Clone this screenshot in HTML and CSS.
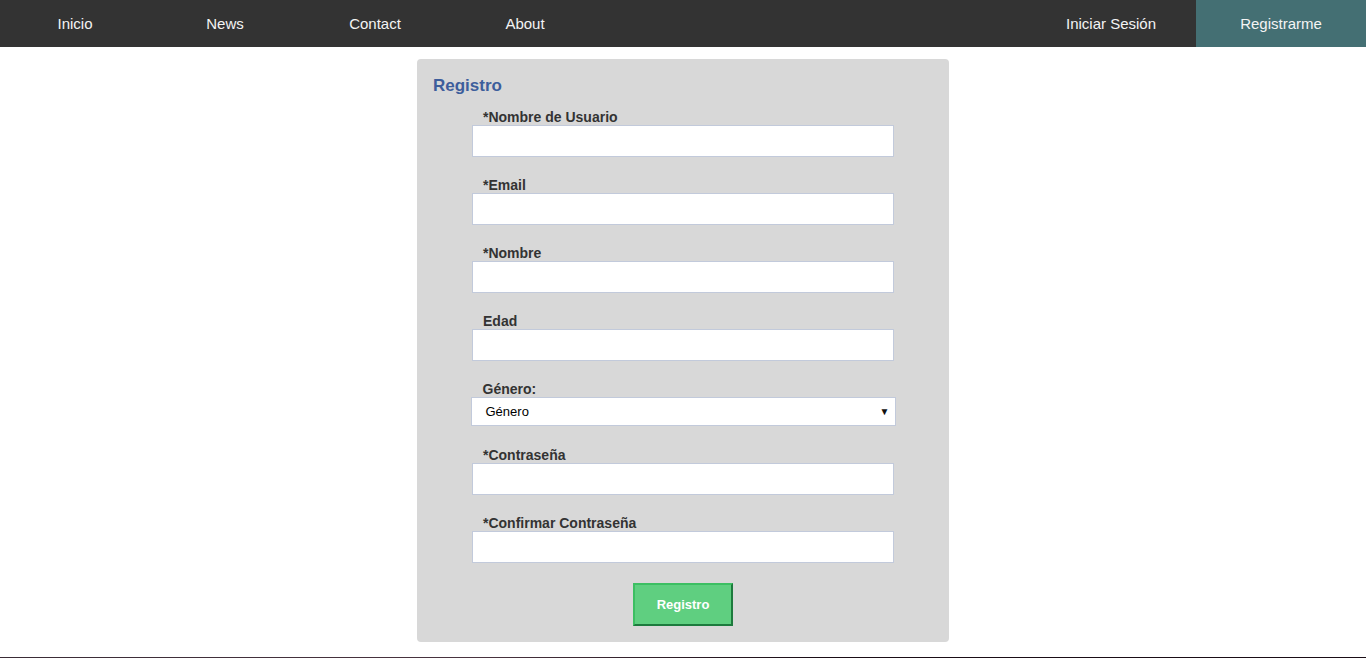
FILE: index.html
```html
<!DOCTYPE html>
<html lang="es">
<head>
<meta charset="utf-8">
<title>Registro</title>
<link rel="stylesheet" href="styles.css">
</head>
<body>
<nav class="topnav">
  <ul class="nav-left">
    <li><a href="#">Inicio</a></li>
    <li><a href="#">News</a></li>
    <li><a href="#">Contact</a></li>
    <li><a href="#">About</a></li>
  </ul>
  <ul class="nav-right">
    <li><a href="#">Iniciar Sesión</a></li>
    <li class="active"><a href="#">Registrarme</a></li>
  </ul>
</nav>
<main class="page">
  <form class="panel">
    <h2 class="panel-title">Registro</h2>
    <div class="field">
      <label class="lbl">*Nombre de Usuario</label>
      <input class="txt" type="text">
    </div>
    <div class="field">
      <label class="lbl">*Email</label>
      <input class="txt" type="text">
    </div>
    <div class="field">
      <label class="lbl">*Nombre</label>
      <input class="txt" type="text">
    </div>
    <div class="field">
      <label class="lbl">Edad</label>
      <input class="txt" type="text">
    </div>
    <div class="field field-select">
      <label class="lbl">Género:</label>
      <div class="select">
        <span class="select-value">Género</span>
        <span class="select-arrow">▼</span>
      </div>
    </div>
    <div class="field">
      <label class="lbl">*Contraseña</label>
      <input class="txt" type="password">
    </div>
    <div class="field">
      <label class="lbl">*Confirmar Contraseña</label>
      <input class="txt" type="password">
    </div>
    <div class="actions">
      <button class="btn" type="button">Registro</button>
    </div>
  </form>
</main>
<footer class="footer"></footer>
</body>
</html>
```
FILE: styles.css
```css
html, body {
  margin: 0;
  padding: 0;
}
body {
  font-family: "Liberation Sans", Arial, sans-serif;
  background: #fff;
  height: 658px;
  overflow: hidden;
  display: flex;
  flex-direction: column;
}
.topnav {
  height: 47px;
  background: #333333;
  display: flex;
  justify-content: space-between;
}
.topnav ul {
  list-style: none;
  margin: 0;
  padding: 0;
  display: flex;
}
.nav-left li {
  width: 150px;
}
.nav-right li {
  width: 170px;
}
.topnav a {
  display: block;
  height: 47px;
  line-height: 47px;
  text-align: center;
  color: #f4f4f4;
  text-decoration: none;
  font-size: 15px;
}
.nav-right li.active {
  background: #446f73;
}
.page {
  flex: 1;
  display: flex;
  justify-content: center;
  align-items: flex-start;
}
.panel {
  width: 532px;
  margin-top: 12px;
  margin-left: 0;
  background: #d8d8d8;
  border-radius: 4px;
  padding: 17px 0 16px;
  box-sizing: border-box;
  display: flex;
  flex-direction: column;
  align-items: center;
}
.panel-title {
  align-self: flex-start;
  margin: 0 0 13px 16px;
  font-size: 17px;
  line-height: 20px;
  font-weight: bold;
  color: #3d5e9c;
}
.field {
  width: 422px;
  display: flex;
  flex-direction: column;
  margin-bottom: 20px;
}
.field-select {
  width: 425px;
  margin-bottom: 21px;
}
.lbl {
  display: block;
  padding-left: 11px;
  font-size: 14px;
  line-height: 16px;
  font-weight: bold;
  color: #333;
}
.field-select .lbl {
  padding-left: 12px;
}
.txt {
  display: block;
  width: 422px;
  height: 32px;
  margin: 0;
  box-sizing: border-box;
  border: 1px solid #c2cadb;
  background: #fff;
  outline: none;
}
.select {
  height: 29px;
  box-sizing: border-box;
  border: 1px solid #c2cadb;
  background: #fff;
  display: flex;
  align-items: center;
  justify-content: space-between;
  padding: 0 5px 0 14px;
  font-size: 13px;
  color: #000;
}
.select-arrow {
  font-size: 10px;
  color: #111;
}
.actions {
  display: flex;
  justify-content: center;
}
.btn {
  width: 100px;
  height: 43px;
  margin-left: 0;
  background: #5fcf80;
  border-style: solid;
  border-width: 2px;
  border-color: #3cbf62 #1d7a3d #1d7a3d #3cbf62;
  color: #fff;
  font-family: "Liberation Sans", Arial, sans-serif;
  font-size: 13px;
  font-weight: bold;
  padding: 0;
}
.footer {
  height: 1px;
  background: linear-gradient(to right, #3a2c36, #4a3440 35%, #1a0d16 60%, #1a0d16);
}
```
